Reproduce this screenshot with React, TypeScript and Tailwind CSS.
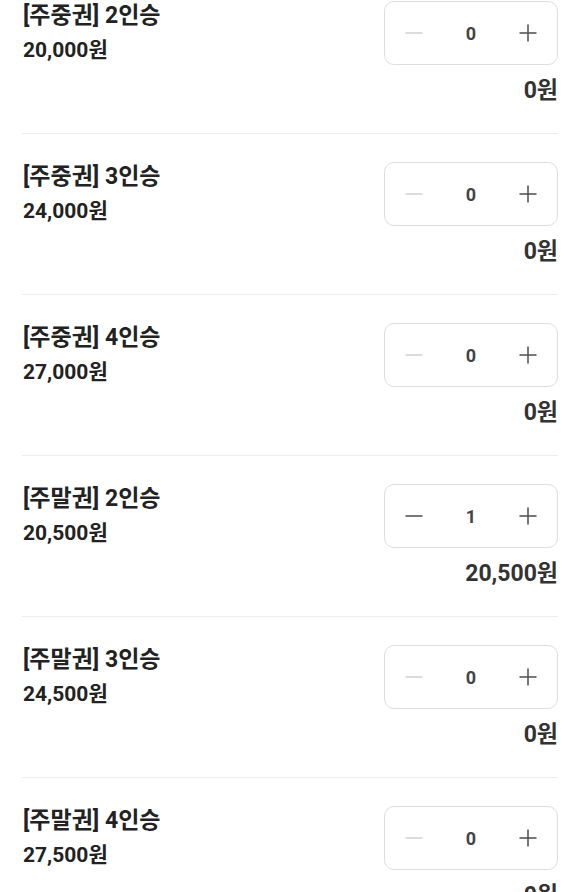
import React from "react";

type Item = { title: string; price: number; qty: number };

const items: Item[] = [
  { title: "[주중권] 2인승", price: 20000, qty: 0 },
  { title: "[주중권] 3인승", price: 24000, qty: 0 },
  { title: "[주중권] 4인승", price: 27000, qty: 0 },
  { title: "[주말권] 2인승", price: 20500, qty: 1 },
  { title: "[주말권] 3인승", price: 24500, qty: 0 },
  { title: "[주말권] 4인승", price: 27500, qty: 0 },
];

const fmt = (n: number) => n.toLocaleString("en-US");

function Minus({ active }: { active: boolean }) {
  return (
    <svg width="18" height="18" viewBox="0 0 18 18">
      <line x1="0.5" y1="9" x2="17.5" y2="9" stroke={active ? "#555555" : "#d4d4d4"} strokeWidth="1.6" />
    </svg>
  );
}

function Plus() {
  return (
    <svg width="18" height="18" viewBox="0 0 18 18">
      <line x1="0.5" y1="9" x2="17.5" y2="9" stroke="#555555" strokeWidth="1.6" />
      <line x1="9" y1="0.5" x2="9" y2="17.5" stroke="#555555" strokeWidth="1.6" />
    </svg>
  );
}

function Row({ item, first }: { item: Item; first: boolean }) {
  return (
    <div
      className={`flex justify-between border-b border-[#eeeeee] ${first ? "pt-[1px]" : "pt-[28px]"} pb-[28px]`}
    >
      <div className="flex flex-col pl-[1px]">
        <div className="text-[23px] leading-[30px] font-bold text-[#222222]">{item.title}</div>
        <div className="text-[21px] leading-[26px] font-bold text-[#222222] mt-[6px]">{fmt(item.price)}원</div>
      </div>
      <div className="flex flex-col items-end">
        <div className="grid grid-cols-3 w-[174px] h-[64px] border border-[#dedede] rounded-[10px] items-center">
          <div className="flex justify-center">
            <Minus active={item.qty > 0} />
          </div>
          <div className="text-center text-[18px] font-bold text-[#444444]">{item.qty}</div>
          <div className="flex justify-center">
            <Plus />
          </div>
        </div>
        <div className="text-[23px] leading-[28px] font-bold text-[#333333] mt-[12px]">
          {fmt(item.price * item.qty)}원
        </div>
      </div>
    </div>
  );
}

export default function App() {
  return (
    <div
      className="w-[580px] h-[892px] overflow-hidden bg-white pl-[22px] pr-[22px]"
      style={{ fontFamily: "Roboto, 'Noto Sans CJK KR', sans-serif" }}
    >
      {items.map((it, i) => (
        <Row key={i} item={it} first={i === 0} />
      ))}
    </div>
  );
}
